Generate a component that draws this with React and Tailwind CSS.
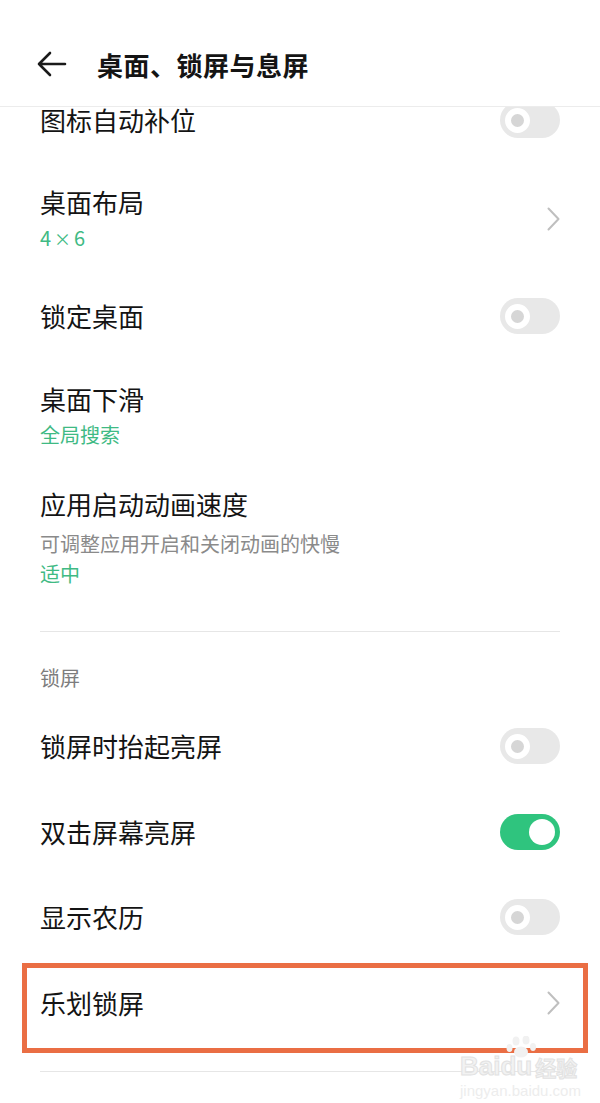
import React from 'react';

const font = { fontFamily: '"Noto Sans CJK SC", "Noto Sans", sans-serif' };

const Toggle = ({ on }) =>
  on ? (
    <div className="w-[60px] h-[36px] rounded-full bg-[#2fc47e] flex items-center justify-end pr-[5px]">
      <div className="w-[26px] h-[26px] rounded-full bg-white" />
    </div>
  ) : (
    <div className="w-[60px] h-[36px] rounded-full bg-[#e8e8e8] flex items-center pl-[5px]">
      <div className="w-[25px] h-[25px] rounded-full border-[6px] border-white bg-[#d6d6d6]" />
    </div>
  );

const Chevron = () => (
  <svg width="13" height="24" viewBox="0 0 13 24" fill="none">
    <polyline points="1.5,1.5 11.5,12 1.5,22.5" stroke="#bfbfbf" strokeWidth="2" strokeLinejoin="round" strokeLinecap="round" />
  </svg>
);

const Row = ({ className, title, children, right }) => (
  <div className={`flex items-center justify-between pl-10 pr-10 ${className}`}>
    <div className="flex flex-col">
      <div className="text-[26px] leading-[40px] text-[#141414]">{title}</div>
      {children}
    </div>
    {right}
  </div>
);

const Green = ({ children, lh = 'leading-[32px]' }) => (
  <div className={`text-[20px] ${lh} text-[#3fba84]`}>{children}</div>
);

export default function App() {
  return (
    <div className="relative w-[600px] h-[1103px] overflow-hidden bg-white" style={font}>
      <header className="h-[107px] pt-[22px] flex items-center border-b border-[#ececec]">
        <div className="pl-[37px]">
          <svg width="30" height="26" viewBox="0 0 30 26" fill="none">
            <path d="M2 13 H28 M13 2 L2 13 L13 24" stroke="#1a1a1a" strokeWidth="2.6" strokeLinecap="round" strokeLinejoin="round" />
          </svg>
        </div>
        <h1 className="ml-[30px] text-[26px] font-semibold text-[#141414] tracking-[0.5px]">桌面、锁屏与息屏</h1>
      </header>

      <div className="h-[996px] overflow-hidden">
        <Row className="mt-[-7px]" title="图标自动补位" right={<Toggle />} />
        <Row className="mt-[42px]" title="桌面布局" right={<Chevron />}>
          <Green>4<span className="mx-[3px] text-[17px]">×</span>6</Green>
        </Row>
        <Row className="mt-[41px]" title="锁定桌面" right={<Toggle />} />
        <Row className="mt-[43px]" title="桌面下滑">
          <Green>全局搜索</Green>
        </Row>
        <Row className="mt-[33px]" title="应用启动动画速度">
          <div className="mt-[4px] text-[20px] leading-[32px] text-[#8a8a8a]">可调整应用开启和关闭动画的快慢</div>
          <Green lh="leading-[28px]">适中</Green>
        </Row>

        <div className="mt-[43px] mx-10 h-px bg-[#e6e6e6]" />

        <div className="mt-[32px] pl-10 text-[20px] leading-[28px] text-[#7d7d7d]">锁屏</div>

        <Row className="mt-[34px]" title="锁屏时抬起亮屏" right={<Toggle />} />
        <Row className="mt-[46px]" title="双击屏幕亮屏" right={<Toggle on />} />
        <Row className="mt-[45px]" title="显示农历" right={<Toggle />} />

        <div className="mt-[26px] ml-[22px] mr-[12px] h-[90px] border-[5px] border-[#ea6e44] pt-[15px] pl-[13px] pr-[23px]">
          <div className="h-[40px] flex items-center justify-between">
            <div className="text-[26px] leading-[40px] text-[#141414]">乐划锁屏</div>
            <Chevron />
          </div>
        </div>

        <div className="mt-[18px] mx-10 h-px bg-[#e6e6e6]" />
      </div>

      {/* watermark */}
      <div className="absolute left-[460px] top-[1036px] flex flex-col items-start select-none pointer-events-none">
        <svg className="ml-[46px]" width="32" height="22" viewBox="0 0 32 22" fill="#f1f1f1">
          <ellipse cx="10" cy="5" rx="3.5" ry="4.5" />
          <ellipse cx="20" cy="4" rx="3.5" ry="4.5" />
          <ellipse cx="3.5" cy="12" rx="3" ry="4" />
          <ellipse cx="27" cy="11" rx="3" ry="4" />
          <ellipse cx="15" cy="16" rx="7" ry="5.5" />
        </svg>
        <div className="flex items-end gap-[3px] -mt-[6px]">
          <span className="text-[26px] leading-[28px] font-bold text-[#f2f2f2] [-webkit-text-stroke:1px_#e2e2e2]" style={{ fontFamily: '"Liberation Sans", sans-serif' }}>Baidu</span>
          <span className="text-[21px] leading-[26px] font-bold text-[#f2f2f2] [-webkit-text-stroke:1px_#e2e2e2]">经验</span>
        </div>
        <div className="mt-[2px] text-[15px] leading-[18px] text-[#ededed]" style={{ fontFamily: '"Liberation Sans", sans-serif' }}>jingyan.baidu.com</div>
      </div>
    </div>
  );
}
